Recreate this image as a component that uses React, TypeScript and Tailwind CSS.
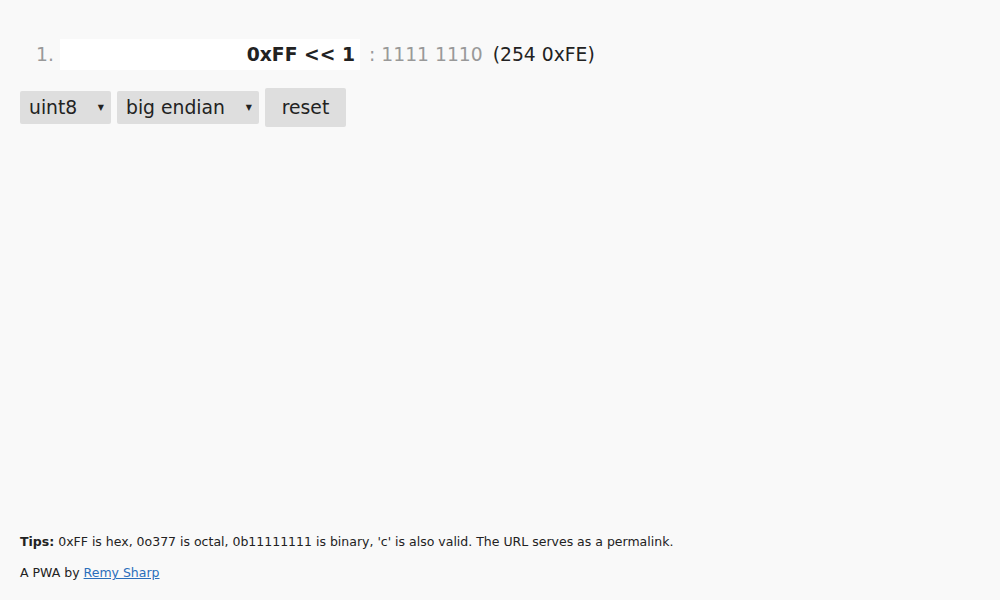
import React from "react";

export default function App() {
  return (
    <div
      className="h-[600px] flex flex-col bg-[#f9f9f9] text-[#222] px-[20px] pt-[39px] pb-[17px]"
      style={{ fontFamily: '"DejaVu Sans", Verdana, sans-serif' }}
    >
      <div className="flex items-center h-[31px] text-[18.75px]">
        <span className="w-[40px] pl-[16px] pt-[2px] text-[#999]">1.</span>
        <div className="w-[300px] h-[31px] bg-white flex items-center justify-end pr-[5px] pt-[2px] font-bold text-[#222]">
          0xFF &lt;&lt; 1
        </div>
        <span className="ml-[9px] pt-[2px] text-[#999]">: 1111 1110</span>
        <span className="ml-[10px] pt-[2px] text-[#222]">(254 0xFE)</span>
      </div>
      <div className="flex items-center gap-[6px] mt-[18px] text-[18.75px]">
        <div className="w-[91px] h-[33px] bg-[#dedede] rounded-[2px] flex items-center justify-between pl-[9px] pr-[7px] pt-[1px] text-[#222]">
          <span>uint8</span>
          <span className="text-[8px]">▼</span>
        </div>
        <div className="w-[142px] h-[33px] bg-[#dedede] rounded-[2px] flex items-center justify-between pl-[9px] pr-[7px] pt-[1px] text-[#222]">
          <span>big endian</span>
          <span className="text-[8px]">▼</span>
        </div>
        <div className="w-[81px] h-[39px] bg-[#dedede] rounded-[2px] flex items-center justify-center pt-[1px] text-[#222]">
          reset
        </div>
      </div>
      <div className="mt-auto text-[12.5px] text-[#222]">
        <p className="leading-[20px]">
          <b>Tips:</b> 0xFF is hex, 0o377 is octal, 0b11111111 is binary, 'c' is also valid. The URL serves as a permalink.
        </p>
        <p className="leading-[20px] mt-[11px]">
          A PWA by <a href="#" className="text-[#2a6ebb] underline">Remy Sharp</a>
        </p>
      </div>
    </div>
  );
}
